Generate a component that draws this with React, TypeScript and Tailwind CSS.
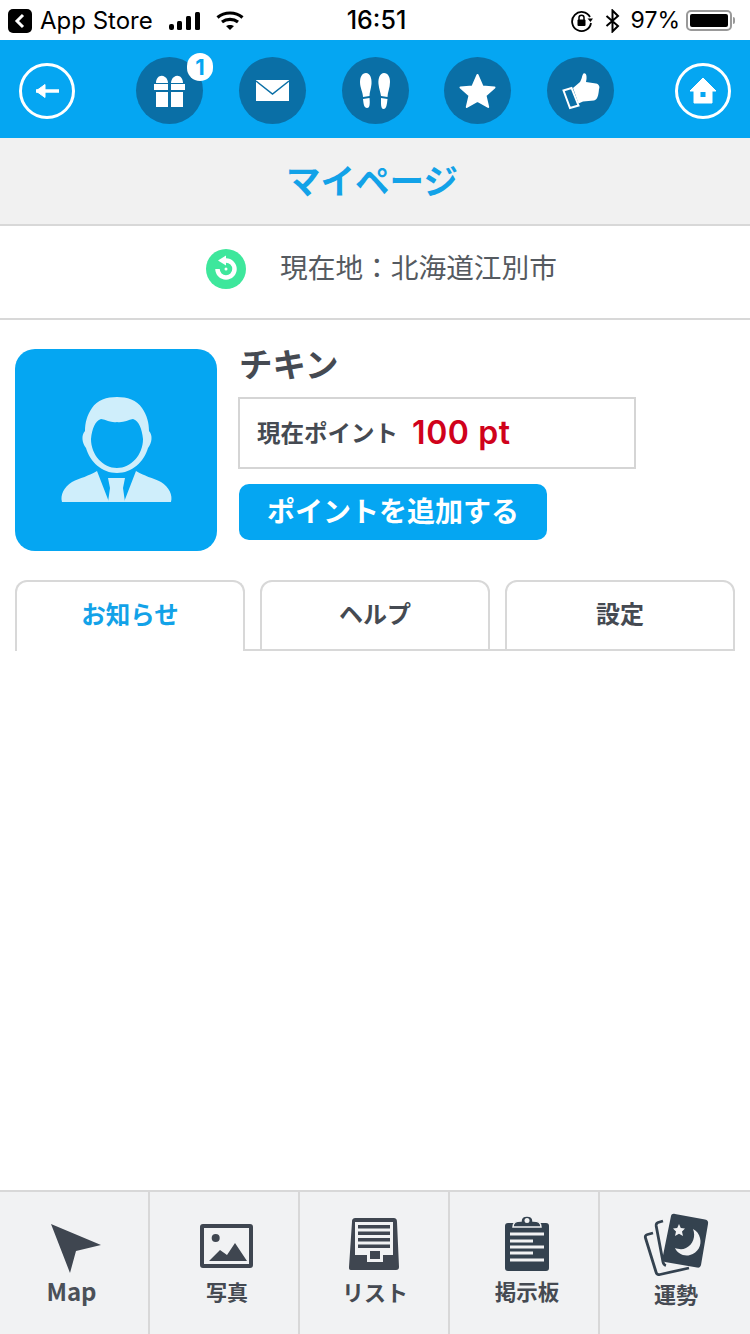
import React from "react";

const font = { fontFamily: '"Inter", "Noto Sans CJK JP", sans-serif' };
const navFont = { fontFamily: '"Noto Sans CJK JP", sans-serif' };

function BackIcon() {
  return (
    <svg width="56" height="56" viewBox="0 0 56 56" fill="none">
      <circle cx="28" cy="28" r="26.5" stroke="white" strokeWidth="3" />
      <path d="M17 28H40" stroke="white" strokeWidth="3.5" />
      <path d="M17 28L26 21.5V34.5Z" fill="white" stroke="white" strokeLinejoin="round" />
    </svg>
  );
}

function HomeIcon() {
  return (
    <svg width="56" height="56" viewBox="0 0 56 56" fill="none">
      <circle cx="28" cy="28" r="26.5" stroke="white" strokeWidth="3" />
      <path d="M28 15L41 28H37V40H19V28H15Z" fill="white" stroke="white" strokeLinejoin="round" />
      <rect x="25.5" y="29" width="5" height="5" fill="#05a6f2" />
    </svg>
  );
}

function GiftIcon() {
  return (
    <svg width="67" height="67" viewBox="0 0 67 67" fill="white">
      <path d="M20 26C20 20 25 17 29 20C31 21 32 24 32 26Z" />
      <path d="M47 26C47 20 42 17 38 20C36 21 35 24 35 26Z" />
      <rect x="18" y="27" width="14" height="6" />
      <rect x="35" y="27" width="14" height="6" />
      <rect x="20" y="35" width="12" height="15" />
      <rect x="35" y="35" width="12" height="15" />
    </svg>
  );
}

function MailIcon() {
  return (
    <svg width="67" height="67" viewBox="0 0 67 67">
      <rect x="17" y="23" width="33" height="21" fill="white" />
      <path d="M17 24L33.5 37L50 24" fill="none" stroke="#0a6fa6" strokeWidth="1.5" />
    </svg>
  );
}

function StepsIcon() {
  return (
    <svg width="67" height="67" viewBox="0 0 67 67" fill="white">
      <path d="M24 16C28 16 30 21 29.5 27C29 32 27.5 35 27.5 39L21 40C21 35 18 31 18 25C18 20 20 16 24 16Z" />
      <path d="M21 42L27.5 41C28 46 28 51 25 51C22 51 21.5 47 21 42Z" />
      <path d="M42 16C38 16 36 21 36.5 27C37 32 38.5 35 39 39L45.5 40C45.5 35 48 31 48 25C48 20 46 16 42 16Z" />
      <path d="M39 41L45.5 42C45 47 44.5 52 41.5 52C38.5 52 39 46 39 41Z" />
    </svg>
  );
}

function StarIcon() {
  return (
    <svg width="67" height="67" viewBox="0 0 67 67" fill="white" stroke="white" strokeLinejoin="round" strokeWidth="2">
      <path d="M33.5 18L38.5 29.5L50.5 30.5L41.5 38.5L44.2 50L33.5 44L22.8 50L25.5 38.5L16.5 30.5L28.5 29.5Z" />
    </svg>
  );
}

function ThumbIcon() {
  return (
    <svg width="67" height="67" viewBox="0 0 67 67" fill="none">
      <path
        d="M26 31L33 25C35 22 35 18 36.5 16.5C39 15.5 40 19 39.5 22L39 25L49 26.5C52 27 53 30 52 32C51.5 38 50.5 43 47 43.5L36 44.5L31.5 46.5Z"
        fill="white"
      />
      <path d="M16.5 33.5L24.5 31L31.5 48.5L23 51Z" stroke="white" strokeWidth="2" />
    </svg>
  );
}

function Avatar() {
  return (
    <svg width="202" height="202" viewBox="0 0 202 202" fill="#cfeefb">
      <path
        fillRule="evenodd"
        d="M102 48C92 48 82 51 77 59C72 66 70 74 70 82C66 86 67 94 71 99C75 113 87 124 102 124C117 124 129 113 133 99C137 94 138 86 134 82C134 74 132 66 127 59C122 51 112 48 102 48ZM86 70C92 71 96 74 102 73C108 74 113 71 118 70C124 72 127 80 128 90C128 106 116 119 102 119C88 119 76 106 76 90C77 80 80 72 86 70Z"
      />
      <path d="M82 122L94 153L47 153C45 146 49 138 57 133C65 129 74 127 82 122Z" />
      <path d="M121 122L109 153L156 153C158 146 154 138 146 133C138 129 129 127 121 122Z" />
      <path d="M93 129L110 129L108 139L110 153L93 153L95 139Z" />
    </svg>
  );
}

function RefreshBadge() {
  return (
    <svg width="40" height="40" viewBox="0 0 40 40" fill="none">
      <circle cx="20" cy="20" r="20" fill="#3ee79c" />
      <path d="M20 11.5A8.5 8.5 0 1 1 11.5 20" stroke="white" strokeWidth="4.5" />
      <path d="M12 11.5L20 6.5V16.5Z" fill="white" />
      <circle cx="20" cy="20" r="1.5" fill="white" />
    </svg>
  );
}

function MapNav() {
  return (
    <svg width="148" height="66" viewBox="0 0 148 66">
      <path d="M51 12L101 33L76 39L70 61Z" fill="#3f4650" />
    </svg>
  );
}

function PhotoNav() {
  return (
    <svg width="148" height="66" viewBox="0 0 148 66" fill="#3f4650">
      <rect x="52" y="14" width="49" height="40" rx="1" fill="none" stroke="#3f4650" strokeWidth="4" />
      <circle cx="65.7" cy="26" r="4" />
      <path d="M59 49L70 38L77 43L85 31L97 49Z" />
    </svg>
  );
}

function ListNav() {
  return (
    <svg width="148" height="66" viewBox="0 0 148 66" fill="#3f4650">
      <path d="M52 10C52 7 53 6 56 6H93C96 6 97 7 97 10L99 55C99 57 98 58 96 58H51C49 58 49 57 49 55Z" />
      <path d="M55 10H93V43H83V50H67V43H55Z" fill="#f1f2f3" />
      <rect x="58" y="13" width="32" height="3.5" />
      <rect x="58" y="19.5" width="32" height="3.5" />
      <rect x="58" y="26" width="32" height="3.5" />
      <rect x="58" y="32.5" width="32" height="3.5" />
      <rect x="70" y="39" width="10" height="8" />
    </svg>
  );
}

function BoardNav() {
  return (
    <svg width="148" height="66" viewBox="0 0 148 66" fill="#34424f">
      <rect x="55" y="11" width="44" height="48" rx="3" />
      <path d="M63 15C63 10 66 9 71 9C71 6 73 4 77 4C81 4 83 6 83 9C88 9 91 10 91 15Z" stroke="#f1f2f3" strokeWidth="1.5" />
      <circle cx="77" cy="8.5" r="2.5" fill="#f1f2f3" />
      <g fill="#f1f2f3">
        <rect x="60" y="20.5" width="34" height="3" />
        <rect x="60" y="27.5" width="23" height="3" />
        <rect x="60" y="33.5" width="34" height="3" />
        <rect x="60" y="39.5" width="23" height="3" />
        <rect x="60" y="46.5" width="34" height="3" />
      </g>
    </svg>
  );
}

function CardsNav() {
  return (
    <svg width="148" height="66" viewBox="0 0 148 66" fill="none">
      <path d="M52 21L46.5 22.5C44.5 23 44 24.5 44.5 26L55 60C55.5 62 57 63 59 62.5L88 56" stroke="#34424f" strokeWidth="2.8" />
      <path d="M62 9L57 10.5C55.5 11 55 12 55.2 14L62 50C62.5 52 63 53 65 53.5" stroke="#34424f" strokeWidth="2.8" />
      <path d="M70 4C70.5 2 72 1.5 74 2L104 7.5C106.5 8 107.5 9.5 107 12L100 53C99.5 55 98 56 96 55.5L64 50C62 49.5 61 48 61.5 46Z" fill="#34424f" />
      <path d="M92 17C95 24 92 33 85 36C81 38 77 37 74 36C76 41 83 45 89 43C97 41 101 33 99 26C98 22 96 19 92 17Z" fill="#f1f2f3" />
      <path d="M78 12L79.8 16L84 16.5L81 19.5L82 24L78 21.8L74 24L75 19.5L72 16.5L76.2 16Z" fill="#f1f2f3" />
    </svg>
  );
}

const navItems = [
  { label: "Map", icon: <MapNav />, text: "mr-[5px] text-[24px] font-bold text-[#4b5058]" },
  { label: "写真", icon: <PhotoNav />, text: "ml-[6px] text-[21px] font-bold text-[#454a52]" },
  { label: "リスト", icon: <ListNav />, text: "ml-[2px] text-[22px] font-bold text-[#454a52]" },
  { label: "掲示板", icon: <BoardNav />, text: "ml-[6px] text-[21.5px] font-bold text-[#454a52]" },
  { label: "運勢", icon: <CardsNav />, text: "ml-[2px] mt-[2px] text-[22px] font-bold text-[#454a52]" },
];

function CircleButton({ children }: { children: React.ReactNode }) {
  return (
    <div className="relative h-[67px] w-[67px] rounded-full bg-[#0a6fa6]">
      {children}
    </div>
  );
}

function Tab({ label, active }: { label: string; active?: boolean }) {
  return (
    <div
      className={
        active
          ? "flex h-[71px] w-[230px] items-center justify-center rounded-t-[12px] border-2 border-b-0 border-[#d8d8d8] pb-[3px] text-[24.5px] font-bold text-[#12a2e8]"
          : "flex h-[71px] w-[230px] items-center justify-center rounded-t-[12px] border-2 border-[#d8d8d8] pb-[1px] text-[24px] font-bold text-[#454a52]"
      }
    >
      {label}
    </div>
  );
}

export default function App() {
  return (
    <div className="flex h-[1334px] w-[750px] flex-col overflow-hidden bg-white" style={font}>
      {/* status bar */}
      <div className="flex h-[40px] items-center pl-[8px] pr-[15px] pt-[1px] text-black">
        <div className="flex flex-1 items-center">
          <div className="flex h-[24px] w-[24px] items-center justify-center rounded-[5px] bg-black">
            <svg width="12" height="16" viewBox="0 0 12 16" fill="none">
              <path d="M9 2L3 8L9 14" stroke="white" strokeWidth="3" />
            </svg>
          </div>
          <span className="ml-[8px] text-[24px] leading-none">App Store</span>
          <svg className="ml-[15px]" width="33" height="20" viewBox="0 0 33 20" fill="black">
            <rect x="1" y="13" width="5" height="6" rx="2" />
            <rect x="9" y="10" width="5" height="9" rx="1.5" />
            <rect x="18" y="5" width="5" height="14" rx="1.5" />
            <rect x="27" y="1" width="5" height="18" rx="1.5" />
          </svg>
          <svg className="ml-[15px]" width="28" height="20" viewBox="0 0 28 20" fill="none" stroke="black" strokeWidth="3.2">
            <path d="M1.5 6.5C8.5 0.5 19.5 0.5 26.5 6.5" />
            <path d="M6 11C10.5 7.5 17.5 7.5 22 11" />
            <path d="M14 19L10 15C12 13.5 16 13.5 18 15Z" fill="black" stroke="none" />
          </svg>
        </div>
        <span className="ml-[10px] text-[25px] font-medium leading-none">16:51</span>
        <div className="flex flex-1 items-center justify-end">
          <svg width="24" height="24" viewBox="0 0 24 24" fill="none" stroke="black" strokeWidth="1.8">
            <path d="M20 8A9.5 9.5 0 1 0 21 14" />
            <path d="M17.5 9.5H23L20.5 13Z" fill="black" stroke="none" />
            <rect x="7.5" y="10.5" width="8" height="6.5" rx="1" fill="black" stroke="none" />
            <path d="M9 11V8.5C9 5.5 14 5.5 14 8.5V11" strokeWidth="1.5" />
          </svg>
          <svg className="ml-[11px]" width="15" height="24" viewBox="0 0 15 24" fill="none" stroke="black" strokeWidth="2">
            <path d="M1.5 7L13 17L7.5 22.5V1.5L13 7L1.5 17" />
          </svg>
          <span className="ml-[11px] text-[23px] leading-none">97%</span>
          <div className="ml-[6px] flex h-[21px] w-[46px] items-center rounded-[5px] border-2 border-[#999] p-[2px]">
            <div className="h-full w-full rounded-[2px] bg-black" />
          </div>
          <div className="ml-[1px] h-[7px] w-[2px] rounded-r-full bg-[#999]" />
        </div>
      </div>

      {/* top toolbar */}
      <div className="flex h-[98px] items-center justify-between bg-[#05a6f2] px-[19px] pt-[3px]">
        <BackIcon />
        <div className="flex gap-[35.75px]">
          <CircleButton>
            <GiftIcon />
            <div className="absolute left-[51px] top-[-4px] flex h-[28px] w-[26px] items-center justify-center rounded-[13px] bg-white text-[22px] font-bold leading-none text-[#05a6f2]">
              1
            </div>
          </CircleButton>
          <CircleButton>
            <MailIcon />
          </CircleButton>
          <CircleButton>
            <StepsIcon />
          </CircleButton>
          <CircleButton>
            <StarIcon />
          </CircleButton>
          <CircleButton>
            <ThumbIcon />
          </CircleButton>
        </div>
        <HomeIcon />
      </div>

      {/* page title */}
      <div className="flex h-[88px] items-center justify-center border-b-2 border-[#d8d8d8] bg-[#f1f1f1] pr-[6px] pt-[2px]">
        <h1 className="text-[34.5px] font-bold leading-none text-[#12a2e8]">マイページ</h1>
      </div>

      {/* location */}
      <div className="flex h-[94px] items-center justify-center gap-[34px] border-b-2 border-[#d8d8d8] pb-[6px] pl-[13px]">
        <RefreshBadge />
        <span className="text-[27.7px] leading-none text-[#555a60]">{"現在地\uFF1A北海道江別市"}</span>
      </div>

      {/* profile */}
      <div className="flex gap-[21px] pl-[15px] pt-[29px]">
        <div className="h-[202px] w-[202px] rounded-[20px] bg-[#05a6f2]">
          <Avatar />
        </div>
        <div className="flex flex-col items-start">
          <div className="ml-[1px] mt-[1px] text-[33.5px] font-bold leading-[30px] text-[#454a52]">チキン</div>
          <div className="mt-[17px] flex h-[72px] w-[398px] items-center border-2 border-[#d5d5d5] pl-[17px]">
            <span className="pt-[2px] text-[23.5px] font-bold text-[#454a52]">現在ポイント</span>
            <span className="ml-[14px] text-[32px] font-semibold leading-none tracking-[0.6px] text-[#d0021b]">100 pt</span>
          </div>
          <button className="ml-[1px] mt-[15px] flex h-[56px] w-[308px] items-center justify-center rounded-[10px] bg-[#05a6f2] text-[28px] font-bold leading-none text-white">
            ポイントを追加する
          </button>
        </div>
      </div>

      {/* tabs */}
      <div className="mt-[29px] flex pl-[15px]">
        <Tab label="お知らせ" active />
        <div className="w-[15px] border-b-2 border-[#d8d8d8]" />
        <Tab label="ヘルプ" />
        <div className="w-[15px] border-b-2 border-[#d8d8d8]" />
        <Tab label="設定" />
      </div>

      <div className="flex-1" />

      {/* bottom nav */}
      <div className="flex h-[144px] border-t-2 border-[#d8d8d8] bg-[#f1f2f3]" style={navFont}>
        {navItems.map((item, i) => (
          <div
            key={item.label}
            className={
              i < 4
                ? "flex w-[150px] flex-col items-center border-r-2 border-[#d8d8d8] pt-[20px]"
                : "flex w-[150px] flex-col items-center pt-[20px]"
            }
          >
            {item.icon}
            <span className={"leading-[26px] " + item.text}>{item.label}</span>
          </div>
        ))}
      </div>
    </div>
  );
}
